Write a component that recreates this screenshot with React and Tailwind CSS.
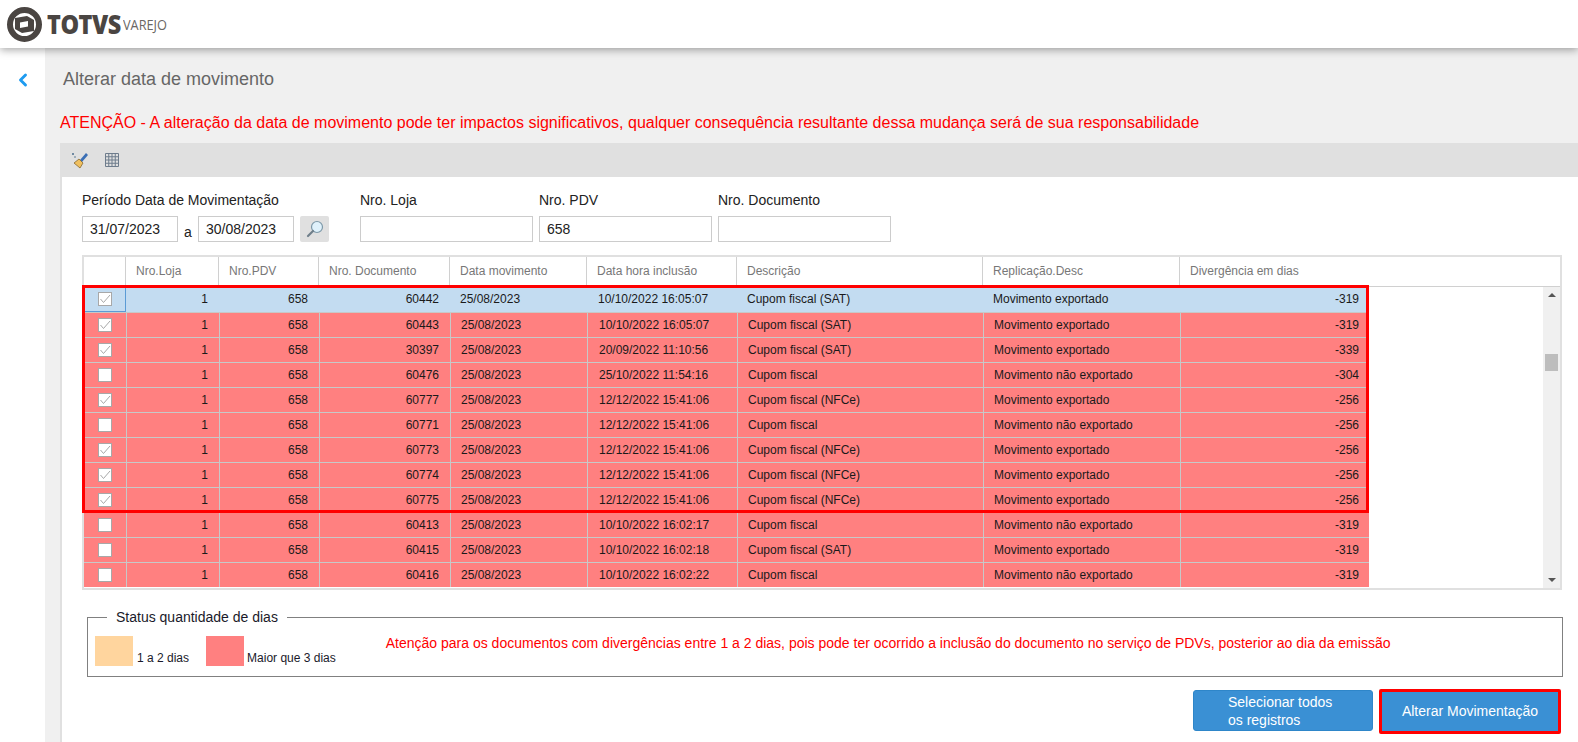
import { ChevronLeft } from "lucide-react";

const rows = [
  [true, "60442", "10/10/2022 16:05:07", "Cupom fiscal (SAT)", "Movimento exportado", "-319"],
  [true, "60443", "10/10/2022 16:05:07", "Cupom fiscal (SAT)", "Movimento exportado", "-319"],
  [true, "30397", "20/09/2022 11:10:56", "Cupom fiscal (SAT)", "Movimento exportado", "-339"],
  [false, "60476", "25/10/2022 11:54:16", "Cupom fiscal", "Movimento não exportado", "-304"],
  [true, "60777", "12/12/2022 15:41:06", "Cupom fiscal (NFCe)", "Movimento exportado", "-256"],
  [false, "60771", "12/12/2022 15:41:06", "Cupom fiscal", "Movimento não exportado", "-256"],
  [true, "60773", "12/12/2022 15:41:06", "Cupom fiscal (NFCe)", "Movimento exportado", "-256"],
  [true, "60774", "12/12/2022 15:41:06", "Cupom fiscal (NFCe)", "Movimento exportado", "-256"],
  [true, "60775", "12/12/2022 15:41:06", "Cupom fiscal (NFCe)", "Movimento exportado", "-256"],
  [false, "60413", "10/10/2022 16:02:17", "Cupom fiscal", "Movimento não exportado", "-319"],
  [true, "60415", "10/10/2022 16:02:18", "Cupom fiscal (SAT)", "Movimento exportado", "-319"],
  [false, "60416", "10/10/2022 16:02:22", "Cupom fiscal", "Movimento não exportado", "-319"],
];
rows[10][0] = false;

function Logo() {
  return (
    <div className="flex items-center pl-[7px]">
      <svg width="35" height="35" viewBox="0 0 35 35">
        <circle cx="17.5" cy="17.5" r="14.5" fill="none" stroke="#4a4542" strokeWidth="6" />
        <path d="M8 11 L20 9 L27 13 L27 24 L15 26 L8 22 Z" fill="#4a4542" />
        <path d="M6 16 L21 14 L29 19 L29 14 L21 10 L6 12 Z" fill="none" />
        <path d="M13 15.5 L21 14 L21 19.5 L13 21 Z" fill="#fff" />
      </svg>
      <span className="ml-[5px] font-['Open_Sans'] text-[26px] font-extrabold leading-none tracking-[-0.5px] text-[#4a4542] scale-x-90 origin-left w-[74px]">TOTVS</span>
      <span className="ml-[2px] font-['Open_Sans'] text-[15px] leading-none text-[#6b6764] scale-x-85 origin-left">VAREJO</span>
    </div>
  );
}

function Field({ label, value, w }) {
  return (
    <div className="flex flex-col">
      <span className="text-[14px] leading-[16px] text-[#222]">{label}</span>
      <div className={`${w} mt-[8px] h-[26px] border border-[#ccc] bg-white px-[7px] text-[14px] leading-[25px] text-[#222]`}>{value}</div>
    </div>
  );
}

function Check({ on }) {
  return (
    <span className="flex h-[14px] w-[14px] items-center justify-center border border-[#a8a8a8] bg-white">
      {on && (
        <svg width="12" height="12" viewBox="0 0 12 12">
          <path d="M1.5 6 L4.5 9.5 L11 2" fill="none" stroke="#a8a8a8" strokeWidth="1" />
        </svg>
      )}
    </span>
  );
}

function Row({ r, selected }) {
  const bg = selected ? "bg-[#c3dcf1]" : "bg-[#ff8080] border-t border-[#c8c8c8]";
  const cell = selected ? "" : "border-l border-[#c8c8c8]";
  return (
    <div className={`flex h-[25px] w-[1285px] items-center text-[12px] text-[#1a1a1a] ${bg}`}>
      <div className={`flex h-full w-[42px] items-center justify-center ${selected ? "border border-[#5b9bd5] border-t-0 border-l-0" : ""}`}><Check on={r[0]} /></div>
      <div className={`h-full w-[93px] pr-[11px] text-right leading-[24px] ${cell}`}>1</div>
      <div className={`h-full w-[100px] pr-[11px] text-right leading-[24px] ${cell}`}>658</div>
      <div className={`h-full w-[131px] pr-[11px] text-right leading-[24px] ${cell}`}>{r[1]}</div>
      <div className={`h-full w-[137px] pl-[10px] leading-[24px] ${cell}`}>25/08/2023</div>
      <div className={`h-full w-[150px] pl-[11px] leading-[24px] ${cell}`}>{r[2]}</div>
      <div className={`h-full w-[246px] pl-[10px] leading-[24px] ${cell}`}>{r[3]}</div>
      <div className={`h-full w-[197px] pl-[10px] leading-[24px] ${cell}`}>{r[4]}</div>
      <div className={`h-full flex-1 pr-[10px] text-right leading-[24px] ${cell}`}>{r[5]}</div>
    </div>
  );
}

const heads = [
  ["w-[93px]", "Nro.Loja"],
  ["w-[100px]", "Nro.PDV"],
  ["w-[131px]", "Nro. Documento"],
  ["w-[137px]", "Data movimento"],
  ["w-[150px]", "Data hora inclusão"],
  ["w-[246px]", "Descrição"],
  ["w-[197px]", "Replicação.Desc"],
  ["flex-1", "Divergência em dias"],
];

export default function App() {
  return (
    <div className="flex h-[742px] w-[1578px] flex-col overflow-hidden bg-white font-['Liberation_Sans',sans-serif]">
      <header className="relative z-10 flex h-[48px] shrink-0 items-center bg-white shadow-[0_2px_8px_rgba(0,0,0,0.35)]">
        <Logo />
      </header>
      <div className="flex flex-1">
        <aside className="flex w-[45px] shrink-0 justify-center bg-white pt-[22px]">
          <ChevronLeft size={20} strokeWidth={3.5} className="text-[#1e9bf0]" />
        </aside>
        <main className="flex flex-1 flex-col bg-[#f0f0f0] pl-[15px]">
          <h1 className="mt-[20px] h-[22px] pl-[3px] text-[18px] leading-[22px] text-[#666]">Alterar data de movimento</h1>
          <p className="mt-[23px] text-[16px] leading-[20px] text-[#ff0000]">ATENÇÃO - A alteração da data de movimento pode ter impactos significativos, qualquer consequência resultante dessa mudança será de sua responsabilidade</p>
          <section className="mt-[10px] flex flex-1 flex-col border-l-2 border-[#e0e0e0] bg-white">
            <div className="-ml-[2px] flex h-[34px] items-center gap-[16px] bg-[#e0e0e0] pl-[11px]">
              <svg width="18" height="18" viewBox="0 0 18 18">
                <circle cx="2" cy="3" r="1" fill="#4a6d8c" />
                <circle cx="4" cy="6" r="0.8" fill="#4a6d8c" />
                <path d="M9 9 L15 2 L17 4 L11 11 Z" fill="#3b6fb5" />
                <path d="M3 12 L8 8 L12 12 L9 17 Z" fill="#f0c060" stroke="#7a5a20" strokeWidth="0.7" />
              </svg>
              <svg width="14" height="14" viewBox="0 0 14 14">
                <path d="M0.5 0.5H13.5V13.5H0.5Z M0.5 3.75H13.5 M0.5 7H13.5 M0.5 10.25H13.5 M3.75 0.5V13.5 M7 0.5V13.5 M10.25 0.5V13.5" fill="none" stroke="#6e7c8c" strokeWidth="1" />
              </svg>
            </div>
            <div className="pl-[20px] pr-[16px]">
              <div className="mt-[15px] flex">
                <div className="flex flex-col">
                  <span className="text-[14px] leading-[16px] text-[#222]">Período Data de Movimentação</span>
                  <div className="mt-[8px] flex items-end">
                    <div className="h-[26px] w-[96px] border border-[#ccc] px-[7px] text-[14px] leading-[25px] text-[#222]">31/07/2023</div>
                    <span className="w-[20px] text-center text-[14px] leading-[20px] text-[#222]">a</span>
                    <div className="h-[26px] w-[96px] border border-[#ccc] px-[7px] text-[14px] leading-[25px] text-[#222]">30/08/2023</div>
                    <div className="ml-[6px] flex h-[26px] w-[29px] items-center justify-center rounded-[2px] bg-[#e0e0e0]">
                      <svg width="18" height="18" viewBox="0 0 18 18">
                        <circle cx="11" cy="7" r="5.5" fill="#dff1fb" stroke="#7d98a8" strokeWidth="1.2" />
                        <path d="M7 11 L2 16" stroke="#6f7f8a" strokeWidth="2.2" strokeLinecap="round" />
                      </svg>
                    </div>
                  </div>
                </div>
                <div className="ml-[31px]"><Field label="Nro. Loja" w="w-[173px]" /></div>
                <div className="ml-[6px]"><Field label="Nro. PDV" value="658" w="w-[173px]" /></div>
                <div className="ml-[6px]"><Field label="Nro. Documento" w="w-[173px]" /></div>
              </div>
              <div className="relative mt-[13px] h-[335px] w-[1480px] border-2 border-[#e0e0e0] border-t-2">
                <div className="flex h-[30px] w-full border-b border-[#d0d0d0] text-[12px] text-[#777]">
                  <div className="w-[41px]" />
                  {heads.map(([w, t]) => (
                    <div key={t} className={`${w} border-l border-[#d0d0d0] pl-[10px] leading-[29px]`}>{t}</div>
                  ))}
                </div>
                <div className="flex h-[301px]">
                  <div className="flex-1 overflow-hidden">
                    {rows.map((r, i) => <Row key={i} r={r} selected={i === 0} />)}
                  </div>
                  <div className="relative flex w-[17px] flex-col items-center justify-between bg-[#f0f0f0] py-[6px]">
                    <span className="h-0 w-0 border-x-[4px] border-b-[4px] border-x-transparent border-b-[#555]" />
                    <span className="h-0 w-0 border-x-[4px] border-t-[4px] border-x-transparent border-t-[#555]" />
                    <span className="absolute left-[2px] top-[67px] h-[17px] w-[13px] bg-[#bdbdbd]" />
                  </div>
                </div>
                <div className="pointer-events-none absolute left-[-2px] top-[28px] h-[228px] w-[1287px] border-[3px] border-[#ff0000]" />
              </div>
            </div>
            <fieldset className="ml-[25px] mt-[19px] h-[68px] w-[1476px] border border-[#808080] px-[7px]">
              <legend className="ml-[12px] px-[9px] text-[14px] leading-[16px] text-[#1a1a2a]">Status quantidade de dias</legend>
              <div className="mt-[10px] flex items-end">
                <span className="h-[30px] w-[38px] bg-[#ffd59e]" />
                <span className="ml-[4px] text-[12px] leading-[15px] text-[#1a1a2a]">1 a 2 dias</span>
                <span className="ml-[17px] h-[30px] w-[38px] bg-[#ff8080]" />
                <span className="ml-[3px] text-[12px] leading-[15px] text-[#1a1a2a]">Maior que 3 dias</span>
                <span className="mb-[15px] ml-[50px] text-[14px] leading-[16px] text-[#ff0000]">Atenção para os documentos com divergências entre 1 a 2 dias, pois pode ter ocorrido a inclusão do documento no serviço de PDVs, posterior ao dia da emissão</span>
              </div>
            </fieldset>
            <div className="mr-[17px] mt-[13px] flex justify-end gap-[6px]">
              <button className="h-[41px] w-[180px] rounded-[3px] border border-[#2e86c9] bg-[#3a90d4] pl-[34px] text-left text-[14px] leading-[18px] text-white">Selecionar todos<br />os registros</button>
              <button className="h-[45px] w-[182px] -translate-y-[1px] rounded-[2px] border-[3px] border-[#ff0000] bg-[#3a90d4] text-[14px] text-white">Alterar Movimentação</button>
            </div>
          </section>
        </main>
      </div>
    </div>
  );
}
